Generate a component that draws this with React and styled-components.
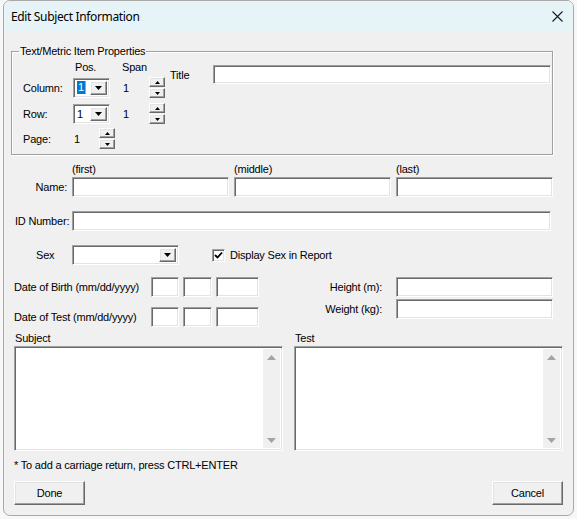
import React from 'react';
import styled, { css, createGlobalStyle } from 'styled-components';

const GlobalStyle = createGlobalStyle`
  html, body {
    margin: 0;
    padding: 0;
    background: #f7f7f7;
  }
  * {
    box-sizing: border-box;
  }
`;

const sunken = css`
  background: #fff;
  border-style: solid;
  border-width: 1px;
  border-color: #a0a0a0 #fff #fff #a0a0a0;
  box-shadow: inset 1px 1px 0 #696969, inset -1px -1px 0 #e3e3e3;
`;

const raised = css`
  background: #f0f0f0;
  border-style: solid;
  border-width: 1px;
  border-color: #fff #696969 #696969 #fff;
  box-shadow: inset -1px -1px 0 #a0a0a0, inset 1px 1px 0 #e3e3e3;
`;

const Page = styled.div`
  width: 577px;
  height: 519px;
  padding-left: 3px;
  font-family: 'Liberation Sans', Arial, sans-serif;
  font-size: 11px;
  letter-spacing: -0.2px;
  color: #000;
`;

const Window = styled.div`
  width: 571px;
  height: 516px;
  background: #f0f0f0;
  border: 1px solid #a9a9a9;
  border-radius: 7px;
  overflow: hidden;
  display: flex;
  flex-direction: column;
`;

const TitleBar = styled.div`
  height: 31px;
  flex: none;
  background: #e6f4f7;
  display: flex;
  align-items: center;
  justify-content: space-between;
  padding: 0 10px 0 7px;
`;

const TitleText = styled.span`
  font-family: 'Noto Sans', 'Open Sans', sans-serif;
  font-size: 12px;
  letter-spacing: -0.35px;
`;

const Content = styled.div`
  display: flex;
  flex-direction: column;
`;

const GroupBox = styled.fieldset`
  margin: 13px 0 0 7px;
  width: 542px;
  padding: 2px 0 5px 11px;
  border: 1px solid #a0a0a0;
  box-shadow: 1px 1px 0 #fff, inset 1px 1px 0 #fff;
  display: flex;
  min-inline-size: auto;
`;

const Legend = styled.legend`
  margin-left: -4px;
  padding: 0 1px;
  line-height: 13px;
`;

const GroupInner = styled.div`
  display: flex;
  align-items: flex-start;
`;

const LeftBlock = styled.div`
  display: flex;
  flex-direction: column;
`;

const HeaderRow = styled.div`
  display: flex;
  height: 14px;
  padding-left: 52px;
  line-height: 14px;
`;

const HeaderCell = styled.span`
  width: ${({ w }) => w}px;
`;

const PropRow = styled.div`
  display: flex;
  align-items: center;
  height: 21px;
  margin-top: ${({ top }) => top}px;
`;

const PropLabel = styled.span`
  width: 50px;
`;

const Value = styled.span`
  width: ${({ w }) => w}px;
  padding-left: ${({ pad }) => pad}px;
`;

const Combo = styled.div`
  ${sunken};
  width: ${({ w }) => w}px;
  height: ${({ h }) => h || 20}px;
  display: flex;
  align-items: stretch;
  padding: 2px;
`;

const ComboValue = styled.div`
  flex: 1;
  display: flex;
  align-items: center;
  padding-left: 1px;
`;

const Selected = styled.span`
  background: #0078d7;
  color: #fff;
  line-height: 13px;
  padding: 0 1px;
  border-right: 1px solid #e89a3c;
`;

const DropButton = styled.div`
  ${raised};
  width: 17px;
  display: flex;
  align-items: center;
  justify-content: center;
`;

const Spinner = styled.div`
  width: 16px;
  height: 21px;
  display: flex;
  flex-direction: column;
  gap: 1px;
`;

const SpinButton = styled.div`
  ${raised};
  flex: 1;
  display: flex;
  align-items: center;
  justify-content: center;
`;

const TitleArea = styled.div`
  display: flex;
  align-items: center;
  margin: 5px 0 0 5px;
`;

const TitleLabel = styled.span`
  width: 43px;
`;

const TextBox = styled.div`
  ${sunken};
  width: ${({ w }) => w}px;
  height: ${({ h }) => h || 20}px;
  flex: none;
`;

const LabelsRow = styled.div`
  display: flex;
  height: 14px;
  line-height: 14px;
  margin-top: 7px;
  padding-left: 68px;
`;

const SubLabel = styled.span`
  width: 162px;
`;

const FieldRow = styled.div`
  display: flex;
  align-items: center;
  gap: ${({ gap }) => gap || 0}px;
  margin-top: ${({ top }) => top}px;
`;

const RowLabel = styled.span`
  width: ${({ w }) => w || 68}px;
  flex: none;
  padding-left: ${({ pad }) => pad || 0}px;
  padding-right: ${({ right }) => right || 0}px;
  text-align: ${({ align }) => align || 'left'};
`;

const CheckLabel = styled.label`
  display: flex;
  align-items: center;
  gap: 5px;
  margin-left: 33px;
`;

const CheckBox = styled.span`
  ${sunken};
  width: 13px;
  height: 13px;
  display: flex;
  align-items: center;
  justify-content: center;
`;

const Columns = styled.div`
  display: flex;
  margin-top: 12px;
`;

const Column = styled.div`
  display: flex;
  flex-direction: column;
  gap: ${({ gap }) => gap}px;
  width: ${({ w }) => w}px;
  padding-left: ${({ pad }) => pad || 0}px;
`;

const DateRow = styled.div`
  display: flex;
  align-items: center;
  gap: 4px;
`;

const DateLabel = styled.span`
  width: 133px;
  flex: none;
  white-space: nowrap;
`;

const Memos = styled.div`
  display: flex;
  gap: 11px;
  padding-left: 10px;
  margin-top: 5px;
`;

const MemoBlock = styled.div`
  display: flex;
  flex-direction: column;
  width: 269px;
`;

const MemoLabel = styled.span`
  line-height: 13px;
  padding-left: 1px;
  margin-bottom: 1px;
`;

const Memo = styled.div`
  ${sunken};
  height: 105px;
  display: flex;
  justify-content: flex-end;
  padding: 2px;
`;

const ScrollTrack = styled.div`
  width: 17px;
  background: #f0f0f0;
  display: flex;
  flex-direction: column;
  justify-content: space-between;
  align-items: center;
  padding: 6px 0 5px;
`;

const Note = styled.div`
  padding-left: 10px;
  margin-top: 8px;
  line-height: 13px;
`;

const ButtonRow = styled.div`
  display: flex;
  justify-content: space-between;
  padding: 0 10px;
  margin-top: 9px;
`;

const Button = styled.button`
  ${raised};
  width: 71px;
  height: 24px;
  font-family: 'Liberation Sans', Arial, sans-serif;
  font-size: 11px;
  letter-spacing: -0.2px;
  color: #000;
  padding: 0;
`;

const Arrow = ({ dir = 'down', w = 7, h = 4, color = '#000' }) => (
  <svg width={w} height={h} viewBox={`0 0 ${w} ${h}`}>
    <polygon
      points={
        dir === 'down'
          ? `0,0 ${w},0 ${w / 2},${h}`
          : `0,${h} ${w},${h} ${w / 2},0`
      }
      fill={color}
    />
  </svg>
);

const ComboBox = ({ w, value, selected }) => (
  <Combo w={w}>
    <ComboValue>{selected ? <Selected>{value}</Selected> : value}</ComboValue>
    <DropButton>
      <Arrow />
    </DropButton>
  </Combo>
);

const SpinControl = () => (
  <Spinner>
    <SpinButton>
      <Arrow dir="up" w={5} h={3} />
    </SpinButton>
    <SpinButton>
      <Arrow w={5} h={3} />
    </SpinButton>
  </Spinner>
);

const MemoField = ({ label }) => (
  <MemoBlock>
    <MemoLabel>{label}</MemoLabel>
    <Memo>
      <ScrollTrack>
        <Arrow dir="up" w={9} h={5} color="#a3a3a3" />
        <Arrow w={9} h={5} color="#a3a3a3" />
      </ScrollTrack>
    </Memo>
  </MemoBlock>
);

const DateField = ({ label }) => (
  <DateRow>
    <DateLabel>{label}</DateLabel>
    <TextBox w={28} />
    <TextBox w={29} />
    <TextBox w={43} />
  </DateRow>
);

export default function App() {
  return (
    <Page>
      <GlobalStyle />
      <Window>
        <TitleBar>
          <TitleText>Edit Subject Information</TitleText>
          <svg width="11" height="11" viewBox="0 0 11 11">
            <path d="M0.5 0.5 L10.5 10.5 M10.5 0.5 L0.5 10.5" stroke="#1a1a1a" strokeWidth="1.1" />
          </svg>
        </TitleBar>
        <Content>
          <GroupBox>
            <Legend>Text/Metric Item Properties</Legend>
            <GroupInner>
              <LeftBlock>
                <HeaderRow>
                  <HeaderCell w={47}>Pos.</HeaderCell>
                  <HeaderCell w={30}>Span</HeaderCell>
                </HeaderRow>
                <PropRow top={3}>
                  <PropLabel>Column:</PropLabel>
                  <ComboBox w={37} value="1" selected />
                  <Value w={39} pad={13}>1</Value>
                  <SpinControl />
                </PropRow>
                <PropRow top={5}>
                  <PropLabel>Row:</PropLabel>
                  <ComboBox w={37} value="1" />
                  <Value w={39} pad={13}>1</Value>
                  <SpinControl />
                </PropRow>
                <PropRow top={4}>
                  <PropLabel>Page:</PropLabel>
                  <Value w={26} pad={1}>1</Value>
                  <SpinControl />
                </PropRow>
              </LeftBlock>
              <TitleArea>
                <TitleLabel>Title</TitleLabel>
                <TextBox w={338} h={19} />
              </TitleArea>
            </GroupInner>
          </GroupBox>

          <LabelsRow>
            <SubLabel>(first)</SubLabel>
            <SubLabel>(middle)</SubLabel>
            <SubLabel>(last)</SubLabel>
          </LabelsRow>
          <FieldRow top={1} gap={5}>
            <RowLabel align="right" w={63}>Name:</RowLabel>
            <TextBox w={157} />
            <TextBox w={157} />
            <TextBox w={157} />
          </FieldRow>

          <FieldRow top={14}>
            <RowLabel pad={11}>ID Number:</RowLabel>
            <TextBox w={479} />
          </FieldRow>

          <FieldRow top={14}>
            <RowLabel pad={32}>Sex</RowLabel>
            <ComboBox w={107} />
            <CheckLabel>
              <CheckBox>
                <svg width="9" height="9" viewBox="0 0 9 9">
                  <path d="M1 4 L3.5 6.5 L8 1.5" stroke="#000" strokeWidth="1.8" fill="none" />
                </svg>
              </CheckBox>
              Display Sex in Report
            </CheckLabel>
          </FieldRow>

          <Columns>
            <Column w={296} pad={10} gap={10}>
              <DateField label="Date of Birth (mm/dd/yyyy)" />
              <DateField label="Date of Test (mm/dd/yyyy)" />
            </Column>
            <Column w={254} gap={2}>
              <FieldRow top={0}>
                <RowLabel align="right" right={14} w={96}>Height (m):</RowLabel>
                <TextBox w={157} />
              </FieldRow>
              <FieldRow top={0}>
                <RowLabel align="right" right={14} w={96}>Weight (kg):</RowLabel>
                <TextBox w={157} />
              </FieldRow>
            </Column>
          </Columns>

          <Memos>
            <MemoField label="Subject" />
            <MemoField label="Test" />
          </Memos>

          <Note>* To add a carriage return, press CTRL+ENTER</Note>

          <ButtonRow>
            <Button>Done</Button>
            <Button>Cancel</Button>
          </ButtonRow>
        </Content>
      </Window>
    </Page>
  );
}
